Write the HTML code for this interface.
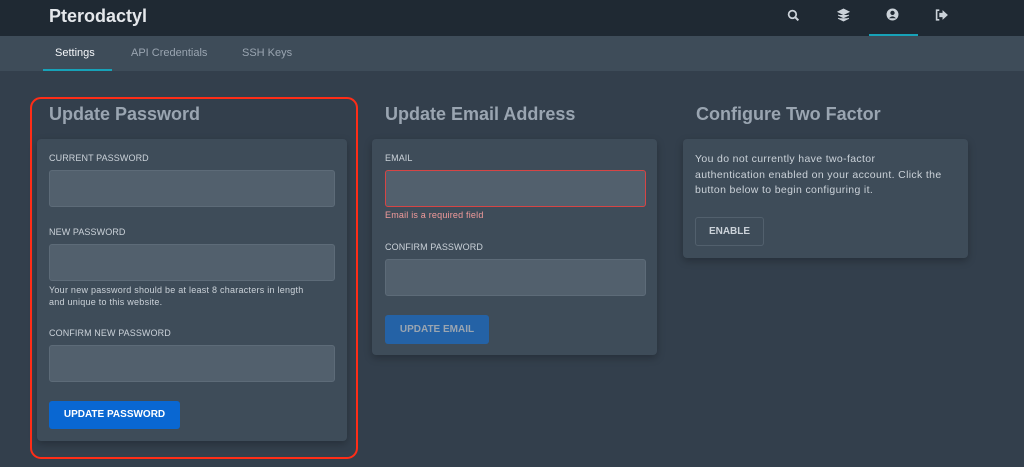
<!DOCTYPE html>
<html><head><style>
*{box-sizing:border-box;margin:0;padding:0}
body{width:1024px;height:467px;overflow:hidden;background:#333f4c;font-family:"Liberation Sans",sans-serif;position:relative}
.a{position:absolute}
.hdr{left:0;top:0;width:1024px;height:36px;background:#1f2933}
.sub{left:0;top:36px;width:1024px;height:35px;background:#3e4c59}
.card{background:#3e4c59;border-radius:4px;box-shadow:0 3px 8px rgba(0,0,0,.25)}
.lbl{font-size:9px;color:#cbd2d9;letter-spacing:.1px}
.in{background:#52606d;border:1px solid #5d6b78;border-radius:3px}
.h{font-size:18px;font-weight:bold;color:#9aa5b1}
.tab{font-size:11px;top:47px}
</style></head><body>
<div class="a hdr"></div>
<div class="a" style="left:49px;top:6px;font-size:18px;color:#e4e7eb;font-weight:bold">Pterodactyl</div>
<svg class="a" style="left:787px;top:9px" width="13" height="13" viewBox="0 0 12 12"><circle cx="5" cy="5" r="3.5" fill="none" stroke="#cbd2d9" stroke-width="1.6"/><path d="M7.5 7.5L10.5 10.5" stroke="#cbd2d9" stroke-width="1.8"/></svg>
<svg class="a" style="left:837px;top:8px" width="13" height="14" viewBox="0 0 12 13"><path d="M6 1L11 3.5 6 6 1 3.5Z M1 6.5L6 9 11 6.5 M1 9.5L6 12 11 9.5" fill="#cbd2d9" stroke="#cbd2d9" stroke-width="1"/></svg>
<svg class="a" style="left:886px;top:8px" width="13" height="13" viewBox="0 0 12 12"><circle cx="6" cy="6" r="5.5" fill="#cbd2d9"/><circle cx="6" cy="4.5" r="2" fill="#1f2933"/><path d="M2.8 9.5Q6 6 9.2 9.5" fill="#1f2933"/></svg>
<svg class="a" style="left:935px;top:9px" width="14" height="12" viewBox="0 0 13 11"><path d="M4 1H1.5V10H4" fill="none" stroke="#cbd2d9" stroke-width="1.5"/><path d="M4 3.5H7V1L12 5.5 7 10V7.5H4Z" fill="#cbd2d9"/></svg>
<div class="a" style="left:869px;top:34px;width:49px;height:2px;background:#17a2b8"></div>
<div class="a sub"></div>
<div class="a tab" style="left:55px;color:#f5f7fa">Settings</div>
<div class="a tab" style="left:131px;color:#9aa5b1">API Credentials</div>
<div class="a tab" style="left:242px;color:#9aa5b1">SSH Keys</div>
<div class="a" style="left:43px;top:69px;width:69px;height:2px;background:#17a2b8"></div>

<div class="a h" style="left:49px;top:104px">Update Password</div>
<div class="a h" style="left:385px;top:104px">Update Email Address</div>
<div class="a h" style="left:696px;top:104px">Configure Two Factor</div>

<div class="a card" style="left:37px;top:139px;width:310px;height:302px"></div>
<div class="a lbl" style="left:49px;top:153px">CURRENT PASSWORD</div>
<div class="a in" style="left:49px;top:170px;width:286px;height:37px"></div>
<div class="a lbl" style="left:49px;top:227px">NEW PASSWORD</div>
<div class="a in" style="left:49px;top:244px;width:286px;height:37px"></div>
<div class="a" style="left:49px;top:284px;font-size:9px;line-height:12px;color:#cbd2d9;letter-spacing:.25px">Your new password should be at least 8 characters in length<br>and unique to this website.</div>
<div class="a lbl" style="left:49px;top:328px">CONFIRM NEW PASSWORD</div>
<div class="a in" style="left:49px;top:345px;width:286px;height:37px"></div>
<div class="a" style="left:49px;top:401px;width:131px;height:28px;background:#0967d2;border-radius:3px;color:#fff;font-size:10px;font-weight:bold;text-align:center;line-height:28px">UPDATE PASSWORD</div>

<div class="a card" style="left:372px;top:139px;width:285px;height:216px"></div>
<div class="a lbl" style="left:385px;top:153px">EMAIL</div>
<div class="a in" style="left:385px;top:170px;width:261px;height:37px;border-color:#d64545"></div>
<div class="a" style="left:385px;top:210px;font-size:9px;color:#f29b9b;letter-spacing:.2px">Email is a required field</div>
<div class="a lbl" style="left:385px;top:242px">CONFIRM PASSWORD</div>
<div class="a in" style="left:385px;top:259px;width:261px;height:37px"></div>
<div class="a" style="left:385px;top:315px;width:104px;height:29px;background:#2462a6;border-radius:3px;color:#9aa5b1;font-size:10px;font-weight:bold;text-align:center;line-height:29px">UPDATE EMAIL</div>

<div class="a card" style="left:683px;top:139px;width:285px;height:119px"></div>
<div class="a" style="left:695px;top:152px;font-size:10.5px;line-height:15.5px;color:#cbd2d9;width:275px;letter-spacing:.35px">You do not currently have two-factor<br>authentication enabled on your account. Click the<br>button below to begin configuring it.</div>
<div class="a" style="left:695px;top:217px;width:69px;height:29px;border:1px solid #52606d;border-radius:3px;color:#cbd2d9;font-size:10px;font-weight:bold;text-align:center;line-height:27px">ENABLE</div>

<div class="a" style="left:30px;top:97px;width:328px;height:362px;border:2px solid #ff2d17;border-radius:11px"></div>
</body></html>
